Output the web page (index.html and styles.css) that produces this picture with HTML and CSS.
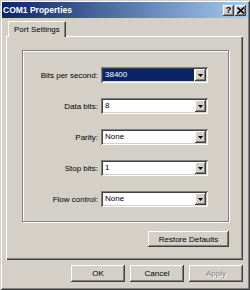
FILE: index.html
```html
<!DOCTYPE html>
<html lang="en">
  <head>
    <meta charset="UTF-8">
    <title>COM1 Properties</title>
    <link rel="stylesheet" href="styles.css">
  </head>
  <body>

    <section class="window">
      <div class="titleBar">
        <span class="titleText">COM1 Properties</span>
        <div class="captionButtons">
          <button class="captionButton">?</button>
          <button class="captionButton">
            <svg width="8" height="7" viewBox="0 0 8 7">
              <path d="M0.5 0.5 L7 6.5 M7 0.5 L0.5 6.5" stroke="#000" stroke-width="1.6" fill="none"/>
            </svg>
          </button>
        </div>
      </div>

      <div class="dialogBody">
        <div class="tabStrip">
          <div class="tab">Port Settings</div>
        </div>

        <div class="tabPanel">
          <div class="settingsGroup">
            <div class="settingRow">
              <span class="settingLabel">Bits per second:</span>
              <div class="combo">
                <span class="comboValue comboSelected">38400</span>
                <span class="comboArrow"><svg width="5" height="3" viewBox="0 0 5 3"><path d="M0 0 H5 L2.5 3 Z" fill="#000"/></svg></span>
              </div>
            </div>
            <div class="settingRow">
              <span class="settingLabel">Data bits:</span>
              <div class="combo">
                <span class="comboValue">8</span>
                <span class="comboArrow"><svg width="5" height="3" viewBox="0 0 5 3"><path d="M0 0 H5 L2.5 3 Z" fill="#000"/></svg></span>
              </div>
            </div>
            <div class="settingRow">
              <span class="settingLabel">Parity:</span>
              <div class="combo">
                <span class="comboValue">None</span>
                <span class="comboArrow"><svg width="5" height="3" viewBox="0 0 5 3"><path d="M0 0 H5 L2.5 3 Z" fill="#000"/></svg></span>
              </div>
            </div>
            <div class="settingRow">
              <span class="settingLabel">Stop bits:</span>
              <div class="combo">
                <span class="comboValue">1</span>
                <span class="comboArrow"><svg width="5" height="3" viewBox="0 0 5 3"><path d="M0 0 H5 L2.5 3 Z" fill="#000"/></svg></span>
              </div>
            </div>
            <div class="settingRow">
              <span class="settingLabel">Flow control:</span>
              <div class="combo">
                <span class="comboValue">None</span>
                <span class="comboArrow"><svg width="5" height="3" viewBox="0 0 5 3"><path d="M0 0 H5 L2.5 3 Z" fill="#000"/></svg></span>
              </div>
            </div>
          </div>

          <div class="restoreRow">
            <button class="dlgButton restoreButton">Restore Defaults</button>
          </div>
        </div>

        <div class="footerButtons">
          <button class="dlgButton footerButton">OK</button>
          <button class="dlgButton footerButton">Cancel</button>
          <button class="dlgButton footerButton disabledButton">Apply</button>
        </div>
      </div>
    </section>

  </body>
</html>
```

FILE: styles.css
```css
body {
  margin: 0;
  font-family: "Liberation Sans", Arial, sans-serif;
  font-size: 8px;
  background-color: #d4d0c8;
  color: black;
}

.window {
  box-sizing: border-box;
  width: 250px;
  height: 290px;
  padding: 2px;
  background-color: #d4d0c8;
  box-shadow: inset 1px 1px #d4d0c8, inset -1px -1px #404040,
    inset 2px 2px #fff, inset -2px -2px #808080;
}

.titleBar {
  display: flex;
  align-items: center;
  justify-content: space-between;
  height: 16px;
  padding-left: 1px;
  background: linear-gradient(to right, #0a246a, #a6caf0);
}

.titleText {
  color: white;
  font-weight: bold;
  font-size: 8.5px;
}

.captionButtons {
  display: flex;
  gap: 1px;
  margin-right: 2px;
}

.captionButton {
  display: flex;
  align-items: center;
  justify-content: center;
  width: 11px;
  height: 11px;
  padding: 0;
  border: none;
  background-color: #d4d0c8;
  font-family: "Liberation Sans", Arial, sans-serif;
  font-weight: bold;
  font-size: 9px;
  line-height: 9px;
  box-shadow: inset -1px -1px #404040, inset 1px 1px #fff,
    inset -2px -2px #808080;
}

.dialogBody {
  padding: 3px 5px 0 4px;
}

.tabStrip {
  display: flex;
  padding-left: 2px;
}

.tab {
  position: relative;
  z-index: 1;
  height: 16px;
  margin-bottom: -1px;
  padding: 0 5px;
  line-height: 15px;
  background-color: #d4d0c8;
  border-top: 1px solid #fff;
  border-left: 1px solid #fff;
  border-right: 1px solid #404040;
  box-sizing: border-box;
  box-shadow: inset -1px 0 #808080;
}

.tabPanel {
  box-sizing: border-box;
  height: 224px;
  padding: 14px 14px 0 16px;
  box-shadow: inset 1px 1px #fff, inset -1px -1px #404040,
    inset -2px -2px #808080;
}

.settingsGroup {
  box-sizing: border-box;
  display: flex;
  flex-direction: column;
  gap: 15px;
  height: 172px;
  padding-top: 16px;
  border: 1px solid #808080;
  box-shadow: inset 1px 1px #fff, 1px 1px #fff;
}

.settingRow {
  display: flex;
  align-items: center;
  height: 16px;
}

.settingLabel {
  width: 75px;
  text-align: right;
}

.combo {
  box-sizing: border-box;
  display: flex;
  width: 107px;
  height: 16px;
  margin-left: 3px;
  padding: 2px;
  background-color: white;
  box-shadow: inset 1px 1px #808080, inset -1px -1px #fff,
    inset 2px 2px #404040, inset -2px -2px #d4d0c8;
}

.comboValue {
  flex: 1;
  padding-left: 2px;
  margin-right: 1px;
  line-height: 12px;
}

.comboSelected {
  background-color: #0a246a;
  color: white;
}

.comboArrow {
  display: flex;
  align-items: center;
  justify-content: center;
  width: 11px;
  height: 12px;
  background-color: #d4d0c8;
  box-shadow: inset -1px -1px #404040, inset 1px 1px #fff,
    inset -2px -2px #808080;
}

.restoreRow {
  display: flex;
  justify-content: flex-end;
  margin-top: 9px;
}

.dlgButton {
  padding: 0;
  border: none;
  background-color: #d4d0c8;
  font-family: "Liberation Sans", Arial, sans-serif;
  font-size: 8px;
  color: black;
  box-shadow: inset -1px -1px #404040, inset 1px 1px #fff,
    inset -2px -2px #808080;
}

.restoreButton {
  width: 81px;
  height: 16px;
}

.footerButtons {
  display: flex;
  justify-content: flex-end;
  gap: 5px;
  margin-top: 5px;
}

.footerButton {
  width: 54px;
  height: 17px;
}

.disabledButton {
  color: #808080;
  text-shadow: 1px 1px #fff;
}
```
